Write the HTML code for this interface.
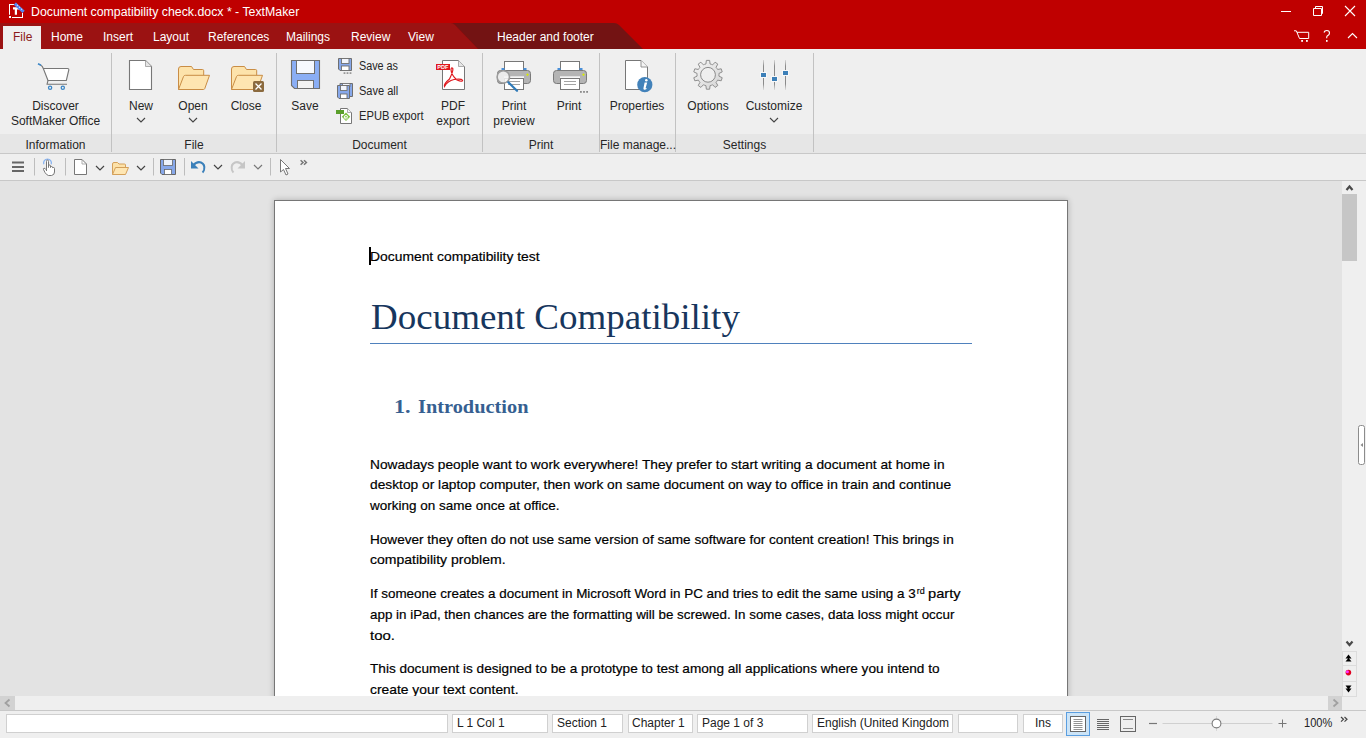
<!DOCTYPE html>
<html><head><meta charset="utf-8">
<style>
*{margin:0;padding:0;box-sizing:border-box}
html,body{width:1366px;height:738px;overflow:hidden;background:#efefef;font-family:"Liberation Sans",sans-serif;font-size:12px;color:#222}
.a{position:absolute}
.t{position:absolute;white-space:pre;line-height:12px}
.c{text-align:center}
#title{left:0;top:0;width:1366px;height:23px;background:#bf0000}
#tabs{left:0;top:23px;width:1366px;height:26px;background:#bf0000}
#ribbon{left:0;top:49px;width:1366px;height:104px;background:#efefef}
#lbl{left:0;top:134px;width:1366px;height:19px;background:#e6e6e6}
.sep{position:absolute;width:1px;background:#c2c2c2;top:53px;height:99px}
.rt{color:#262626}
#tb{left:0;top:153px;width:1366px;height:28px;background:#efefef;border-top:1px solid #c8c8c8;border-bottom:1px solid #c8c8c8}
#doc{left:0;top:181px;width:1342px;height:515px;background:#e3e3e3;overflow:hidden}
#page{left:275px;top:200px;width:793px;height:600px;background:#fff;border:1px solid #8a8a8a}
.p{position:absolute;white-space:pre;font-size:13.5px;line-height:13.5px;color:#000;transform-origin:0 0;-webkit-text-stroke:0.2px #000}
#status{left:0;top:711px;width:1366px;height:27px;background:#efefef}
.sb{position:absolute;top:714px;height:19px;background:#fff;border:1px solid #d0d0d0}
.st{position:absolute;white-space:pre;line-height:12px;top:717px;color:#222}
</style></head><body>
<!-- title bar -->
<div id="title" class="a"></div>
<div id="tabs" class="a"></div>
<svg class="a" style="left:0;top:23px" width="1366" height="26">
<path d="M0 0H451Q453 0 455 2L478 26H0Z" fill="#9b1212"/>
<path d="M455 2Q453 0 451 0H614Q617 0 619 2L643 26H478Z" fill="#731313"/>
</svg>
<div class="t" style="left:31px;top:6px;color:#fff;transform-origin:0 0;transform:scaleX(1.027)">Document compatibility check.docx * - TextMaker</div>
<div class="a" style="left:3px;top:26px;width:38px;height:23px;background:#efefef"></div>
<div class="t" style="left:13px;top:31px;color:#8b1a1a">File</div>
<div class="t" style="left:51px;top:31px;color:#fff">Home</div>
<div class="t" style="left:103px;top:31px;color:#fff">Insert</div>
<div class="t" style="left:153px;top:31px;color:#fff">Layout</div>
<div class="t" style="left:208px;top:31px;color:#fff">References</div>
<div class="t" style="left:286px;top:31px;color:#fff">Mailings</div>
<div class="t" style="left:351px;top:31px;color:#fff">Review</div>
<div class="t" style="left:408px;top:31px;color:#fff">View</div>
<div class="t" style="left:497px;top:31px;color:#fff">Header and footer</div>

<!-- ribbon -->
<div id="ribbon" class="a"></div>
<div id="lbl" class="a"></div>
<div class="sep" style="left:111px"></div>
<div class="sep" style="left:276px"></div>
<div class="sep" style="left:482px"></div>
<div class="sep" style="left:599px"></div>
<div class="sep" style="left:675px"></div>
<div class="sep" style="left:813px"></div>


<!-- ribbon labels -->
<div class="t c rt" style="left:0;width:111px;top:100px">Discover</div>
<div class="t c rt" style="left:0;width:111px;top:115px">SoftMaker Office</div>
<div class="t c rt" style="left:0;width:111px;top:139px">Information</div>
<div class="t c rt" style="left:121px;width:40px;top:100px">New</div>
<div class="t c rt" style="left:173px;width:40px;top:100px">Open</div>
<div class="t c rt" style="left:226px;width:40px;top:100px">Close</div>
<div class="t c rt" style="left:112px;width:164px;top:139px">File</div>
<div class="t c rt" style="left:285px;width:40px;top:100px">Save</div>
<div class="t rt" style="left:359px;top:60px;transform-origin:0 0;transform:scaleX(0.9)">Save as</div>
<div class="t rt" style="left:359px;top:85px;transform-origin:0 0;transform:scaleX(0.92)">Save all</div>
<div class="t rt" style="left:359px;top:110px;transform-origin:0 0;transform:scaleX(0.93)">EPUB export</div>
<div class="t c rt" style="left:428px;width:50px;top:100px">PDF</div>
<div class="t c rt" style="left:428px;width:50px;top:115px">export</div>
<div class="t c rt" style="left:277px;width:205px;top:139px">Document</div>
<div class="t c rt" style="left:484px;width:60px;top:100px">Print</div>
<div class="t c rt" style="left:484px;width:60px;top:115px">preview</div>
<div class="t c rt" style="left:544px;width:50px;top:100px">Print</div>
<div class="t c rt" style="left:483px;width:116px;top:139px">Print</div>
<div class="t c rt" style="left:602px;width:70px;top:100px">Properties</div>
<div class="t c rt" style="left:600px;width:75px;top:139px">File manage...</div>
<div class="t c rt" style="left:680px;width:56px;top:100px">Options</div>
<div class="t c rt" style="left:741px;width:66px;top:100px">Customize</div>
<div class="t c rt" style="left:676px;width:137px;top:139px">Settings</div>


<svg class="a" style="left:0;top:0" width="1366" height="738" viewBox="0 0 1366 738">
<!-- app icon -->
<path d="M9 4H14V5H10V14.7H9Z M12 17H22V13H23V18H12Z" fill="#fff"/>
<rect x="9" y="16" width="2" height="2" fill="#fff"/>
<path d="M13 7.2H19V9.5H17V14.8H14.8V9.5H13Z" fill="#fff"/>
<path d="M14.8 3.6L23.6 11.8" stroke="#5688f2" stroke-width="3.2"/>
<path d="M17 5L17.7 5.6M19.2 7L19.9 7.6M21.3 8.9L22 9.5" stroke="#eef3ff" stroke-width="1.1"/>
<!-- window controls -->
<path d="M1281 11.5H1291" stroke="#fff" stroke-width="1"/>
<path d="M1313.5 8.5H1321.5V15.5H1313.5Z M1315.5 8.5V6.5H1322.5V13.5H1321.5" fill="none" stroke="#fff" stroke-width="1"/>
<path d="M1345 6L1355 16M1355 6L1345 16" stroke="#fff" stroke-width="1.1"/>
<!-- right tab icons -->
<path d="M1294 30.8H1296.3L1299.5 38.5H1308.7V32.3H1297" fill="none" stroke="#fff" stroke-width="1"/>
<rect x="1301.2" y="40" width="1.8" height="1.8" fill="#fff"/><rect x="1306" y="40" width="1.8" height="1.8" fill="#fff"/>
<path d="M1324 32.5Q1324.5 30.5 1326.8 30.5Q1329.5 30.5 1329.5 33Q1329.5 34.8 1327.5 35.8Q1326.7 36.3 1326.7 37.5V38.3" fill="none" stroke="#fff" stroke-width="1.1"/>
<rect x="1326" y="40" width="1.6" height="1.8" fill="#fff"/>
<path d="M1348 38L1352.5 33.5L1357 38" fill="none" stroke="#fff" stroke-width="1.1"/>

<!-- cart -->
<path d="M43.5 68.5H68Q69.2 68.6 69 70L66.5 80.5H48Z" fill="#fff"/>
<g fill="none" stroke="#777" stroke-width="1.1" stroke-linejoin="round">
<path d="M40.5 65Q42.5 66 43.3 68.5L48 80.5H66.3L68.8 70Q69 68.5 67.5 68.5H43.3"/>
<path d="M48 80.5L47 84.3H67"/>
</g>
<path d="M38 63.8L41 65.2" stroke="#3b86c6" stroke-width="1.6"/>
<circle cx="50.1" cy="87.8" r="1.6" fill="none" stroke="#3b86c6" stroke-width="1.3"/>
<circle cx="62.8" cy="87.8" r="1.6" fill="none" stroke="#3b86c6" stroke-width="1.3"/>
<!-- new doc -->
<path d="M129.5 60.5H145.5L151.5 66.5V89.5H129.5Z" fill="#fff" stroke="#777" stroke-width="1.1"/>
<path d="M145.5 60.5V66.5H151.5" fill="#e6e6e6" stroke="#999" stroke-width="0.8"/>
<path d="M137 118L141 122L145 118" fill="none" stroke="#444" stroke-width="1.1"/>
<!-- open folder -->
<path d="M178.5 89.5V69Q178.5 66.5 181.0 66.5H191.5L193.5 69.5H202.5Q203.7 69.5 203.7 70.7V75.5" fill="#fde3ab" stroke="#c98d45" stroke-width="1"/>
<path d="M178.5 89.5L183.5 76.5Q184.0 75.3 185.5 75.3H209.5L204.8 88.5Q204.4 89.5 203.4 89.5Z" fill="#fee5b1" stroke="#c98d45" stroke-width="1"/>
<path d="M189 118L193 122L197 118" fill="none" stroke="#444" stroke-width="1.1"/>
<!-- close folder -->
<path d="M231.5 89.5V69Q231.5 66.5 234.0 66.5H244.5L246.5 69.5H255.5Q256.7 69.5 256.7 70.7V75.5" fill="#fde3ab" stroke="#c98d45" stroke-width="1"/>
<path d="M231.5 89.5L236.5 76.5Q237.0 75.3 238.5 75.3H262.5L257.8 88.5Q257.4 89.5 256.4 89.5Z" fill="#fee5b1" stroke="#c98d45" stroke-width="1"/>
<rect x="253" y="81" width="11" height="11" rx="1.5" fill="#8b6a3e"/>
<path d="M255.5 83.5L261.5 89.5M261.5 83.5L255.5 89.5" stroke="#fff" stroke-width="1.3"/>

<!-- save big -->
<path d="M291.5 60.5H319.5V88.5H294.5L291.5 85.5Z" fill="#8aaef5" stroke="#6f6f6f" stroke-width="1.1"/>
<rect x="296.5" y="60.5" width="18" height="13" fill="#f6f9fe" stroke="#6f6f6f" stroke-width="1"/>
<rect x="297.5" y="80.5" width="16" height="8" fill="#f2f2f2" stroke="#6f6f6f" stroke-width="1"/>
<!-- save as small -->
<path d="M338.5 58.5H351.5V70.5H340L338.5 69Z" fill="#87a8ea" stroke="#6f6f6f" stroke-width="1"/>
<rect x="341.5" y="58.5" width="7.5" height="5" fill="#f2f5fc" stroke="#6f6f6f" stroke-width="0.9"/>
<rect x="341.5" y="66" width="7.5" height="4.5" fill="#fff" stroke="#6f6f6f" stroke-width="0.9"/>
<rect x="343.6" y="72.2" width="1.8" height="1.8" fill="#999"/><rect x="346.6" y="72.2" width="1.8" height="1.8" fill="#999"/><rect x="349.6" y="72.2" width="1.8" height="1.8" fill="#999"/>
<!-- save all -->
<path d="M340 83.5H352.5V96.5H340Z" fill="#87a8ea" stroke="#6f6f6f" stroke-width="1"/>
<rect x="342.5" y="83.5" width="7.5" height="3" fill="#f2f5fc" stroke="#6f6f6f" stroke-width="0.8"/>
<path d="M337.5 85.5H349.5V98.5H339L337.5 97Z" fill="#87a8ea" stroke="#6f6f6f" stroke-width="1"/>
<rect x="340.5" y="85.5" width="6.5" height="5" fill="#f2f5fc" stroke="#6f6f6f" stroke-width="0.9"/>
<rect x="340.5" y="94" width="6.5" height="4.5" fill="#fff" stroke="#6f6f6f" stroke-width="0.9"/>
<!-- epub -->
<path d="M340.5 108.5H347.5L351.5 112.5V123.5H340.5Z" fill="#fff" stroke="#777" stroke-width="1"/>
<path d="M347.5 108.5V112.5H351.5" fill="#f4f4f4" stroke="#999" stroke-width="0.8"/>
<rect x="336" y="110" width="8" height="4" fill="#5a9e2a"/>
<path d="M346 112.6L350.2 116.8L346 121L341.8 116.8Z" fill="#7ec242"/>
<path d="M344 117.3H347.6Q347.6 115.4 346 115.4Q344.3 115.4 344.3 117.2Q344.3 119 346.2 119L347.5 118.6" fill="none" stroke="#fff" stroke-width="0.9"/>

<!-- pdf -->
<path d="M442.5 60.5H458.5L464.5 66.5V89.5H442.5Z" fill="#fff" stroke="#777" stroke-width="1"/>
<path d="M458.5 60.5V66.5H464.5" fill="#e6e6e6" stroke="#999" stroke-width="0.8"/>
<rect x="436" y="64" width="14" height="6" fill="#e0191f"/>
<text x="437.2" y="69.2" font-family="Liberation Sans" font-weight="bold" font-size="5.6" fill="#fff">PDF</text>
<path d="M444.5 86.5Q443.5 84 449.5 79Q453.5 71 452.8 68.5Q451.3 66.8 451 69.5Q451.2 75 457 80Q462.5 82.3 462.6 80.3Q461.5 78.5 454 79.5Q447.5 81 444.5 86.5Z" fill="none" stroke="#e0191f" stroke-width="1.2"/>

<!-- print preview -->
<rect x="504.5" y="61.5" width="19" height="9" fill="#fff" stroke="#777" stroke-width="1"/>
<rect x="501.5" y="68" width="3" height="2.3" fill="#4a90d9"/><rect x="523.5" y="68" width="3" height="2.3" fill="#4a90d9"/>
<rect x="497.5" y="70.5" width="33" height="13" rx="3" fill="#b4b4b4" stroke="#7a7a7a" stroke-width="1"/>
<path d="M527.5 73.3L528.9 74.7L527.5 76.1L526.1 74.7Z" fill="#d8ec00"/>
<rect x="504.0" y="76.3" width="20" height="1.8" fill="#f4f4f4"/>
<rect x="504.5" y="78.5" width="19" height="11" fill="#fff" stroke="#777" stroke-width="1"/>
<path d="M508.0 81.5H520.0M508.0 84.5H520.0" stroke="#999" stroke-width="0.9"/>
<circle cx="503.3" cy="76.9" r="6.2" fill="rgba(245,245,245,0.85)" stroke="#9c9c9c" stroke-width="1.6"/>
<path d="M508.3 82.3L517 90.8" stroke="#2f7ab8" stroke-width="2.2" stroke-linecap="round"/>
<!-- print -->
<rect x="560.5" y="61.5" width="19" height="9" fill="#fff" stroke="#777" stroke-width="1"/>
<rect x="557.5" y="68" width="3" height="2.3" fill="#4a90d9"/><rect x="579.5" y="68" width="3" height="2.3" fill="#4a90d9"/>
<rect x="553.5" y="70.5" width="33" height="13" rx="3" fill="#b4b4b4" stroke="#7a7a7a" stroke-width="1"/>
<path d="M583.5 73.3L584.9 74.7L583.5 76.1L582.1 74.7Z" fill="#d8ec00"/>
<rect x="560.0" y="76.3" width="20" height="1.8" fill="#f4f4f4"/>
<rect x="560.5" y="78.5" width="19" height="11" fill="#fff" stroke="#777" stroke-width="1"/>
<path d="M564.0 81.5H576.0M564.0 84.5H576.0" stroke="#999" stroke-width="0.9"/>
<rect x="580" y="91" width="1.8" height="1.8" fill="#8a8a8a"/><rect x="583.1" y="91" width="1.8" height="1.8" fill="#8a8a8a"/><rect x="586.2" y="91" width="1.8" height="1.8" fill="#8a8a8a"/>
<!-- properties -->
<path d="M625.5 60.5H641L647.5 67V89.5H625.5Z" fill="#fff" stroke="#777" stroke-width="1"/>
<path d="M641 60.5V67H647.5" fill="#f4f4f4" stroke="#888" stroke-width="0.9"/>
<circle cx="644.8" cy="84.7" r="7.6" fill="#4282ba"/>
<circle cx="646.3" cy="80.3" r="1.25" fill="#fff"/>
<path d="M644.6 82.4H647.2L645.7 87.8Q645.5 88.7 646.8 88.1L646.5 89.1Q645 90 643.9 89.5Q643.1 89.1 643.5 88Z" fill="#fff"/>

<!-- gear -->
<defs><linearGradient id="gg" x1="0" y1="0" x2="1" y2="1"><stop offset="0" stop-color="#f4f4f4"/><stop offset="1" stop-color="#d4d4d4"/></linearGradient></defs>
<path d="M704.60 64.34 L705.90 64.00 L706.36 60.39 L709.64 60.39 L710.10 64.00 L711.40 64.34 L712.65 64.83 L715.14 62.18 L717.80 64.11 L716.04 67.30 L716.90 68.33 L717.62 69.47 L721.19 68.79 L722.21 71.91 L718.92 73.46 L719.00 74.80 L718.92 76.14 L722.21 77.69 L721.19 80.81 L717.62 80.13 L716.90 81.27 L716.04 82.30 L717.80 85.49 L715.14 87.42 L712.65 84.77 L711.40 85.26 L710.10 85.60 L709.64 89.21 L706.36 89.21 L705.90 85.60 L704.60 85.26 L703.35 84.77 L700.86 87.42 L698.20 85.49 L699.96 82.30 L699.10 81.27 L698.38 80.13 L694.81 80.81 L693.79 77.69 L697.08 76.14 L697.00 74.80 L697.08 73.46 L693.79 71.91 L694.81 68.79 L698.38 69.47 L699.10 68.33 L699.96 67.30 L698.20 64.11 L700.86 62.18 L703.35 64.83Z" fill="url(#gg)" stroke="#8f8f8f" stroke-width="1" stroke-linejoin="round"/>
<circle cx="708" cy="74.8" r="7.4" fill="#efefef" stroke="#8a8a8a" stroke-width="1"/>
<!-- customize -->
<defs><linearGradient id="sl" gradientUnits="userSpaceOnUse" x1="0" y1="60" x2="0" y2="90"><stop offset="0" stop-color="#9a9a9a" stop-opacity="0.3"/><stop offset="0.2" stop-color="#8a8a8a"/><stop offset="0.8" stop-color="#8a8a8a"/><stop offset="1" stop-color="#9a9a9a" stop-opacity="0.2"/></linearGradient></defs>
<path d="M763.5 60V90M774.5 60V90M785.5 60V90" stroke="url(#sl)" stroke-width="1"/>
<rect x="760.5" y="72.5" width="6" height="5" fill="#3d80b8" stroke="#f8f8f8" stroke-width="1"/>
<rect x="771.5" y="76.5" width="6" height="5" fill="#3d80b8" stroke="#f8f8f8" stroke-width="1"/>
<rect x="782.5" y="70.5" width="6" height="5" fill="#3d80b8" stroke="#f8f8f8" stroke-width="1"/>
<path d="M770 118L774 122L778 118" fill="none" stroke="#444" stroke-width="1.1"/>
</svg>

<!-- toolbar -->
<div id="tb" class="a"></div>


<svg class="a" style="left:0;top:153px" width="320" height="28" viewBox="0 153 320 28">
<path d="M12 162.5H24M12 167H24M12 171H24" stroke="#666" stroke-width="1.8"/>
<path d="M34.5 158V175.5M65.5 158V175.5M153.5 158V175.5M184.5 158V175.5M270.5 158V175.5" stroke="#bdbdbd" stroke-width="1"/>
<!-- hand -->
<path d="M43.8 164.2A3.9 3.9 0 1 1 51.2 164.2" fill="none" stroke="#8ab4f0" stroke-width="1.3"/>
<path d="M46.5 171V161.5Q46.5 160 47.5 160Q48.5 160 48.5 161.5V167.5V166Q48.5 165 49.5 165Q50.5 165 50.5 166V167.5Q50.5 166.5 51.5 166.5Q52.5 166.5 52.5 167.5V168Q52.5 167.5 53.5 167.5Q54.5 167.5 54.5 168.5V172Q54.5 175 51.5 175.5H48.5Q46.5 175 45 172.5L43.5 169.5Q43 168.5 44 168.2Q45 168 46.5 170" fill="#fff" stroke="#777" stroke-width="1"/>
<!-- new doc -->
<path d="M74.5 159.5H82L86.5 164V174.5H74.5Z" fill="#fff" stroke="#777" stroke-width="1"/>
<path d="M82 159.5V164H86.5" fill="none" stroke="#999" stroke-width="0.8"/>
<path d="M96 166L100 170L104 166" fill="none" stroke="#444" stroke-width="1.2"/>
<!-- folder -->
<path d="M112.5 174.5V164Q112.5 162.5 114 162.5H117.5L119 164H124.5Q125.5 164 125.5 165V167" fill="#fde2a9" stroke="#d4a05a" stroke-width="1"/>
<path d="M112.5 174.5L115.5 167.5H128.5L125.5 174.5Z" fill="#fee6b3" stroke="#d4a05a" stroke-width="1"/>
<path d="M137 166L141 170L145 166" fill="none" stroke="#444" stroke-width="1.2"/>
<!-- save -->
<path d="M160.5 159.5H175.5V174.5H162L160.5 173Z" fill="#87a8ea" stroke="#666" stroke-width="1"/>
<rect x="163.5" y="159.5" width="9" height="6" fill="#eef3fb" stroke="#666" stroke-width="0.8"/>
<rect x="164.5" y="169.5" width="7" height="5" fill="#fff" stroke="#666" stroke-width="0.8"/>
<!-- undo -->
<path d="M193 165.5Q197 161 201 162.5Q205.5 164.5 204 170Q203.5 171.5 202.5 172.5" fill="none" stroke="#3b80ba" stroke-width="2"/>
<path d="M191 161V168.5H198.5Z" fill="#3b80ba"/>
<path d="M214 165L218 169L222 165" fill="none" stroke="#444" stroke-width="1.2"/>
<!-- redo -->
<path d="M243 165.5Q239 161 235 162.5Q230.5 164.5 232 170Q232.5 171.5 233.5 172.5" fill="none" stroke="#c6c6c6" stroke-width="2"/>
<path d="M245 161V168.5H237.5Z" fill="#c6c6c6"/>
<path d="M254 165L258 169L262 165" fill="none" stroke="#777" stroke-width="1.2"/>
<!-- cursor -->
<path d="M280.5 159.5V172L283.5 169.5L286 175L288 174L285.5 168.5H289.5Z" fill="#fff" stroke="#777" stroke-width="1" stroke-linejoin="round"/>
<path d="M300.6 160.3L303 162.5L300.6 164.7M304 160.3L306.4 162.5L304 164.7" fill="none" stroke="#757575" stroke-width="1.5"/>
</svg>

<!-- doc -->
<div id="doc" class="a"></div>
<div class="a" style="left:0;top:181px;width:1342px;height:515px;overflow:hidden">
<div class="a" style="left:0;top:-181px;width:1341px;height:738px">
<div class="a" style="left:274px;top:200px;width:794px;height:520px;background:#fff;border:1px solid #767676;box-shadow:0 0 6px rgba(0,0,0,0.24)"></div>
<div class="a" style="left:369px;top:247px;width:2px;height:18px;background:#000"></div>
<div class="p" style="left:370px;top:250px;transform:scaleX(1.0276)">Document compatibility test</div>
<div class="t" style="left:370.7px;top:300px;font-family:'Liberation Serif';font-size:35px;line-height:35px;color:#17365d;transform-origin:0 0;transform:scaleX(1.057)">Document Compatibility</div>
<div class="a" style="left:370px;top:343px;width:602px;height:1px;background:#4f81bd"></div>
<div class="t" style="left:393.5px;top:398px;font-family:'Liberation Serif';font-weight:bold;font-size:18.5px;line-height:18.5px;color:#365f91;transform-origin:0 0;transform:scaleX(1.2)">1.</div>
<div class="t" style="left:418px;top:398px;font-family:'Liberation Serif';font-weight:bold;font-size:18.5px;line-height:18.5px;color:#365f91;transform-origin:0 0;transform:scaleX(1.10)">Introduction</div>
<div class="p" style="left:369.5px;top:458.0px;transform:scaleX(1.0159)">Nowadays people want to work everywhere! They prefer to start writing a document at home in</div>
<div class="p" style="left:369.5px;top:478.0px;transform:scaleX(1.0192)">desktop or laptop computer, then work on same document on way to office in train and continue</div>
<div class="p" style="left:369.5px;top:498.5px;transform:scaleX(0.9994)">working on same once at office.</div>
<div class="p" style="left:369.5px;top:533.0px;transform:scaleX(1.0054)">However they often do not use same version of same software for content creation! This brings in</div>
<div class="p" style="left:369.5px;top:553.0px;transform:scaleX(1.0381)">compatibility problem.</div>
<div class="p" style="left:369.5px;top:587.0px;transform:scaleX(0.9954)">If someone creates a document in Microsoft Word in PC and tries to edit the same using a 3</div>
<div class="t" style="left:916.8px;top:587px;font-size:9px;line-height:9px;color:#000;-webkit-text-stroke:0.15px #000">rd</div>
<div class="p" style="left:927.5px;top:587.0px;transform:scaleX(1.086)">party</div>
<div class="p" style="left:369.5px;top:608.0px;transform:scaleX(0.9908)">app in iPad, then chances are the formatting will be screwed. In some cases, data loss might occur</div>
<div class="p" style="left:369.5px;top:629.0px;transform:scaleX(1.1054)">too.</div>
<div class="p" style="left:369.5px;top:662.0px;transform:scaleX(1.0078)">This document is designed to be a prototype to test among all applications where you intend to</div>
<div class="p" style="left:369.5px;top:683.0px;transform:scaleX(1.0254)">create your text content.</div>
</div></div>

<!-- status -->

<!-- h scrollbar -->
<div class="a" style="left:0;top:696px;width:1342px;height:14px;background:#efefef"></div>
<div class="a" style="left:0;top:696px;width:15px;height:14px;background:#d2d2d2"></div>
<div class="a" style="left:1328px;top:696px;width:14px;height:14px;background:#d2d2d2"></div>
<svg class="a" style="left:0;top:696px" width="1366" height="14" viewBox="0 696 1366 14">
<path d="M9.5 699.5L5.5 703L9.5 706.5" fill="none" stroke="#a0a0a0" stroke-width="1.8"/>
<path d="M1333.5 699.5L1337.5 703L1333.5 706.5" fill="none" stroke="#a0a0a0" stroke-width="1.8"/>
</svg>
<!-- v scrollbar -->
<div class="a" style="left:1342px;top:181px;width:24px;height:529px;background:#efefef"></div>
<div class="a" style="left:1342px;top:194px;width:15px;height:67px;background:#c6c6c6"></div>
<svg class="a" style="left:1340px;top:180px" width="26" height="530" viewBox="1340 180 26 530">
<path d="M1346.5 190L1349.5 186.5L1352.5 190" fill="none" stroke="#4a4a4a" stroke-width="2.2"/>
<path d="M1346.5 641.5L1349.5 645L1352.5 641.5" fill="none" stroke="#4a4a4a" stroke-width="2.2"/>
<rect x="1358.5" y="425.5" width="6" height="39" rx="2" fill="#fff" stroke="#8c8c8c" stroke-width="1"/>
<path d="M1360.5 445L1363 443V447Z" fill="#888"/>
<rect x="1342.5" y="651.5" width="14" height="14" fill="#efefef" stroke="#dcdcdc" stroke-width="1"/>
<rect x="1342.5" y="665.5" width="14" height="16" fill="#efefef" stroke="#dcdcdc" stroke-width="1"/>
<rect x="1342.5" y="681.5" width="14" height="15" fill="#efefef" stroke="#dcdcdc" stroke-width="1"/>
<path d="M1345.5 658.5L1348.5 654.5L1351.5 658.5Z M1345.5 661.5L1348.5 658L1351.5 661.5Z" fill="#000"/>
<circle cx="1348.4" cy="672.6" r="2.8" fill="#e00020"/>
<circle cx="1347.4" cy="671.8" r="1.5" fill="#ff30ff"/>
<path d="M1345.5 685.5L1348.5 689.5L1351.5 685.5Z M1345.5 688.5L1348.5 692.5L1351.5 688.5Z" fill="#000"/>
</svg>
<div class="a" style="left:0;top:710px;width:1366px;height:1px;background:#c8c8c8"></div>
<div id="status" class="a"></div>
<div class="sb" style="left:6px;width:442px"></div>
<div class="sb" style="left:452px;width:96px"></div>
<div class="sb" style="left:552px;width:71px"></div>
<div class="sb" style="left:628px;width:65px"></div>
<div class="sb" style="left:697px;width:111px"></div>
<div class="sb" style="left:812px;width:141px"></div>
<div class="sb" style="left:958px;width:60px"></div>
<div class="sb" style="left:1023px;width:40px"></div>
<div class="st" style="left:457px">L 1 Col 1</div>
<div class="st" style="left:557px">Section 1</div>
<div class="st" style="left:632px">Chapter 1</div>
<div class="st" style="left:702px">Page 1 of 3</div>
<div class="st" style="left:817px">English (United Kingdom</div>
<div class="st" style="left:1023px;width:40px;text-align:center">Ins</div>
<div class="a" style="left:1066px;top:712px;width:24px;height:24px;background:#cce4f7;border:1px solid #5a9ee0"></div>
<svg class="a" style="left:1060px;top:700px" width="306" height="38" viewBox="1060 700 306 38">
<rect x="1070.5" y="716.5" width="15" height="15" fill="#fff" stroke="#666" stroke-width="1"/>
<path d="M1073.5 719.5H1082.5M1073.5 721.5H1082.5M1073.5 723.5H1082.5M1073.5 725.5H1082.5M1073.5 727.5H1082.5M1073.5 729.5H1082.5" stroke="#777" stroke-width="0.8"/>
<path d="M1097 719.5H1109M1097 721.5H1109M1097 723.5H1109M1097 725.5H1109M1097 727.5H1109M1097 729.5H1109" stroke="#666" stroke-width="1"/>
<rect x="1120.5" y="716.5" width="15" height="15" fill="none" stroke="#666" stroke-width="1"/>
<path d="M1123 719.5H1133M1123 728.5H1133" stroke="#888" stroke-width="1"/>
<path d="M1149 723.5H1157" stroke="#777" stroke-width="1.2"/>
<path d="M1162.5 723.5H1272.5" stroke="#d0d0d0" stroke-width="1"/>
<path d="M1216.5 716V731" stroke="#d8d8d8" stroke-width="1"/><circle cx="1216.5" cy="723.5" r="4.4" fill="#fff" stroke="#7a7a7a" stroke-width="1.1"/>
<path d="M1278.5 723.5H1286.5M1282.5 719.5V727.5" stroke="#777" stroke-width="1"/>
<path d="M1341 717L1343.5 719.3L1341 721.6M1344.5 717L1347 719.3L1344.5 721.6" fill="none" stroke="#444" stroke-width="1.2"/>
</svg>
<div class="st" style="left:1304px;transform-origin:0 0;transform:scaleX(0.92)">100%</div>

</body></html>
